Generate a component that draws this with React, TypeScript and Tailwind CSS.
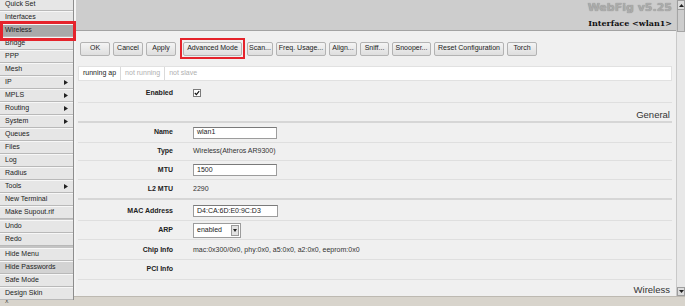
import React from "react";

type MenuItem = { label: string; arrow?: boolean; active?: boolean; shade?: boolean };

const menuGroups: MenuItem[][] = [
  [
    { label: "Quick Set" },
    { label: "Interfaces" },
    { label: "Wireless", active: true },
    { label: "Bridge" },
    { label: "PPP" },
    { label: "Mesh" },
    { label: "IP", arrow: true },
    { label: "MPLS", arrow: true },
    { label: "Routing", arrow: true },
    { label: "System", arrow: true },
    { label: "Queues" },
    { label: "Files" },
    { label: "Log" },
    { label: "Radius" },
    { label: "Tools", arrow: true },
    { label: "New Terminal" },
    { label: "Make Supout.rif" },
  ],
  [{ label: "Undo" }, { label: "Redo" }],
  [
    { label: "Hide Menu" },
    { label: "Hide Passwords", shade: true },
    { label: "Safe Mode" },
    { label: "Design Skin" },
  ],
];

const buttons = [
  { label: "OK", w: "w-[30px]" },
  { label: "Cancel", w: "w-[30px]" },
  { label: "Apply", w: "w-[30px]" },
  { label: "Advanced Mode", w: "w-[59px]", marked: true },
  { label: "Scan...", w: "w-[26px]" },
  { label: "Freq. Usage...", w: "w-[50px]" },
  { label: "Align...", w: "w-[28px]" },
  { label: "Sniff...", w: "w-[29px]" },
  { label: "Snooper...", w: "w-[39px]" },
  { label: "Reset Configuration", w: "w-[70px]" },
  { label: "Torch", w: "w-[30px]" },
];

function Arrow() {
  return (
    <svg width="4" height="5" viewBox="0 0 4 5" className="ml-auto mr-[5px]">
      <path d="M0 0 L4 2.5 L0 5 Z" fill="#222" />
    </svg>
  );
}

function Sidebar() {
  return (
    <div className="relative w-[76px] shrink-0 bg-[#f4f4f4]">
      <div className="mt-[-2px] flex w-[74px] flex-col gap-[1px] border-r border-[#8d8d8d] bg-[#c4c4c4]">
        {menuGroups.map((group, gi) => (
          <div key={gi} className={gi === 2 ? "mt-[1px] flex flex-col" : "flex flex-col"}>
            {group.map((item) => (
              <div
                key={item.label}
                className={`flex h-[13px] items-center border-b border-t border-b-[#b9b9b9] border-t-[#f7f7f7] pl-[5px] text-[7px] text-[#222] ${
                  item.active ? "bg-[#a9a9a9]" : item.shade ? "bg-[#d3d3d3]" : "bg-[#e6e6e6]"
                }`}
              >
                {item.label}
                {item.arrow && <Arrow />}
              </div>
            ))}
          </div>
        ))}
      </div>
      <div className="pointer-events-none absolute left-0 top-[21px] h-[20px] w-[76px] border-[3px] border-[#e5232b]" />
    </div>
  );
}

function Btn({ label, w }: { label: string; w: string }) {
  return (
    <div
      className={`flex h-[14px] ${w} items-center justify-center rounded-[2px] border border-[#b3b3b3] bg-gradient-to-b from-[#f4f4f4] to-[#dedede] text-[7px] text-[#222]`}
    >
      {label}
    </div>
  );
}

function Input({ value, w }: { value: string; w: string }) {
  return (
    <div
      className={`flex h-[12px] ${w} items-center border border-[#9c9c9c] border-t-[#7a7a7a] bg-white pl-[3px] text-[7px] text-[#222]`}
    >
      {value}
    </div>
  );
}

function Row({
  label,
  h,
  dark,
  children,
}: {
  label: string;
  h: string;
  dark?: boolean;
  children?: React.ReactNode;
}) {
  return (
    <div
      className={`flex ${h} items-center ${dark ? "border-b-2 border-[#d6d6d6]" : "border-b border-[#dfdfdf]"}`}
    >
      <div className="w-[95px] text-right text-[7px] font-bold text-[#222]">{label}</div>
      <div className="ml-[20px] flex items-center text-[7px] text-[#333]">{children}</div>
    </div>
  );
}

function Heading({ text, h, dark }: { text: string; h: string; dark?: boolean }) {
  return (
    <div
      className={`flex ${h} items-end justify-end pr-[2px] text-[9.5px] leading-[12px] text-[#333] ${
        dark ? "border-b-2 border-[#d6d6d6]" : ""
      }`}
    >
      {text}
    </div>
  );
}

export default function App() {
  return (
    <div className="flex h-[306px] w-[685px] flex-col overflow-hidden bg-[#f0f0f0] font-['Liberation_Sans',Arial,sans-serif]">
      <div className="flex h-[296px]">
        <Sidebar />

        <div className="flex min-w-0 flex-1 flex-col">
          {/* header */}
          <div className="flex h-[31px] shrink-0 flex-col items-end border-b border-[#a3a3a3] bg-[#cdcdcd] pr-[4px]">
            <div className="mt-[1px] font-['DejaVu_Sans',sans-serif] text-[11px] font-bold leading-[14px] text-[#ababab] [text-shadow:0_0_1px_#808080]">
              WebFig v5.25
            </div>
            <div className="mt-[3px] font-['DejaVu_Serif',serif] text-[8px] font-bold leading-[10px] text-[#111]">
              Interface &lt;wlan1&gt;
            </div>
          </div>

          <div className="flex flex-1 flex-col pl-[2px] pr-[4px]">
            {/* toolbar */}
            <div className="mt-[7px] flex h-[21px] items-center gap-[3px] pl-[2px]">
              {buttons.map((b) =>
                b.marked ? (
                  <div
                    key={b.label}
                    className="ml-[1px] mr-[-1px] flex h-[21px] items-center border-2 border-[#e5232b] pl-[1px] pr-[1px]"
                  >
                    <Btn label={b.label} w={b.w} />
                  </div>
                ) : (
                  <Btn key={b.label} label={b.label} w={b.w} />
                )
              )}
            </div>

            {/* tabs */}
            <div className="mt-[7px] flex h-[15px] items-stretch border border-[#e1e1e1] bg-white text-[7px]">
              <div className="flex items-center border-r border-[#dadada] px-[4px] text-[#222]">running ap</div>
              <div className="flex items-center border-r border-[#dadada] px-[4px] text-[#b0b0b0]">not running</div>
              <div className="flex items-center px-[4px] text-[#b0b0b0]">not slave</div>
            </div>

            {/* form */}
            <div className="flex flex-1 flex-col">
              <Row label="Enabled" h="h-[22px] pt-[3px]">
                <div className="flex h-[8px] w-[8px] items-center justify-center border border-[#7b7b7b] bg-white">
                  <svg width="6" height="6" viewBox="0 0 6 6">
                    <path d="M0.8 3 L2.4 4.6 L5.2 1.2" stroke="#111" strokeWidth="1.1" fill="none" />
                  </svg>
                </div>
              </Row>
              <Heading text="General" h="h-[20px]" dark />
              <Row label="Name" h="h-[20px]">
                <Input value="wlan1" w="w-[84px]" />
              </Row>
              <Row label="Type" h="h-[18px]">
                Wireless(Atheros AR9300)
              </Row>
              <Row label="MTU" h="h-[19px]">
                <Input value="1500" w="w-[84px]" />
              </Row>
              <Row label="L2 MTU" h="h-[20px]" dark>
                2290
              </Row>
              <Row label="MAC Address" h="h-[21px] pt-[2px]">
                <Input value="D4:CA:6D:E0:9C:D3" w="w-[85px]" />
              </Row>
              <Row label="ARP" h="h-[19px]">
                <div className="flex h-[15px] w-[48px] items-center justify-between border border-[#9c9c9c] bg-white pl-[3px] pr-[1px] text-[7px] text-[#222]">
                  enabled
                  <div className="flex h-[11px] w-[8px] items-center justify-center border border-[#9a9a9a] bg-[#e2e2e2]">
                    <svg width="4" height="3" viewBox="0 0 4 3">
                      <path d="M0 0 L4 0 L2 3 Z" fill="#222" />
                    </svg>
                  </div>
                </div>
              </Row>
              <Row label="Chip Info" h="h-[20px] pt-[2px]">
                mac:0x300/0x0, phy:0x0, a5:0x0, a2:0x0, eeprom:0x0
              </Row>
              <Row label="PCI Info" h="h-[20px]" />
              <Heading text="Wireless" h="flex-1" />
            </div>
          </div>
        </div>

        {/* scrollbar */}
        <div className="flex w-[9px] shrink-0 flex-col border-l border-[#c9c9c9] bg-[#e8e8e8]">
          <div className="flex h-[10px] items-center justify-center border border-[#9d9d9d] bg-[#dcdcdc]">
            <svg width="5" height="3" viewBox="0 0 5 3">
              <path d="M0 3 L5 3 L2.5 0 Z" fill="#222" />
            </svg>
          </div>
          <div className="h-[22px] border-x border-b border-[#a5a5a5] bg-[#cdcdcd]" />
          <div className="flex-1" />
          <div className="flex h-[9px] items-center justify-center border border-[#9d9d9d] bg-[#dcdcdc]">
            <svg width="5" height="3" viewBox="0 0 5 3">
              <path d="M0 0 L5 0 L2.5 3 Z" fill="#222" />
            </svg>
          </div>
        </div>
      </div>

      {/* bottom bar */}
      <div className="flex h-[10px] items-center border-t border-[#bdb9b1] bg-[#d8d4cc] pl-[5px] text-[7px] text-[#555]">
        x
      </div>
    </div>
  );
}
